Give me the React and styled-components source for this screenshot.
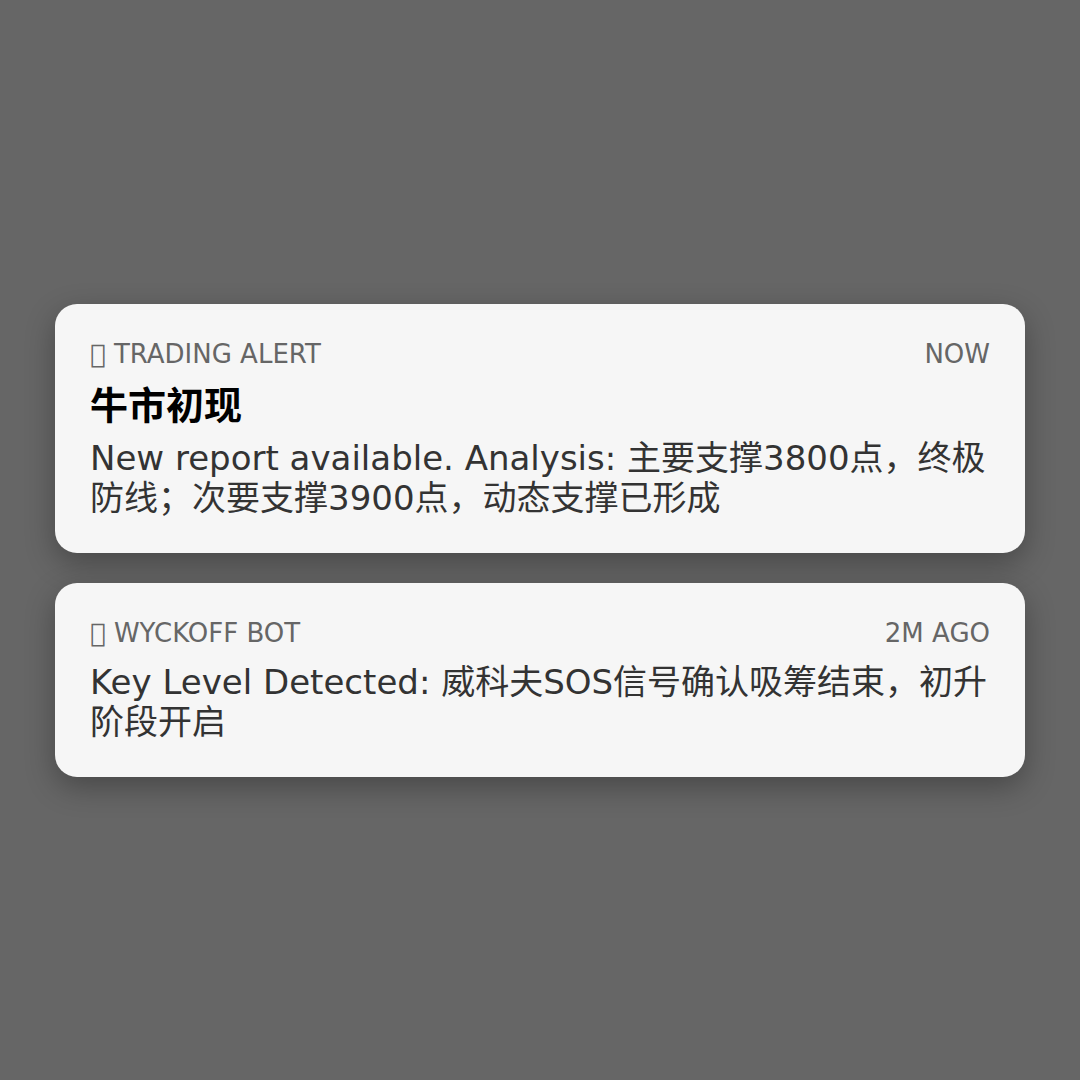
import styled, { createGlobalStyle } from "styled-components";

const GlobalStyle = createGlobalStyle`
  html, body {
    margin: 0;
    padding: 0;
    background: #666666;
  }
  body {
    font-family: "DejaVu Sans", "Noto Sans CJK SC", sans-serif;
  }
`;

const notifications = [
  {
    icon: "\uE000",
    app: "TRADING ALERT",
    time: "NOW",
    title: "牛市初现",
    body: "New report available. Analysis: 主要支撑3800点，终极防线；次要支撑3900点，动态支撑已形成",
  },
  {
    icon: "\uE001",
    app: "WYCKOFF BOT",
    time: "2M AGO",
    body: "Key Level Detected: 威科夫SOS信号确认吸筹结束，初升阶段开启",
  },
];

export default function App() {
  return (
    <>
      <GlobalStyle />
      <Page>
        <Stack>
          {notifications.map((n, i) => (
            <Card key={i}>
              <Header>
                <span>
                  {n.icon} {n.app}
                </span>
                <span>{n.time}</span>
              </Header>
              {n.title && <Title>{n.title}</Title>}
              <Body>{n.body}</Body>
            </Card>
          ))}
        </Stack>
      </Page>
    </>
  );
}

const Page = styled.div`
  width: 1080px;
  height: 1080px;
  display: flex;
  align-items: center;
  justify-content: center;
  box-sizing: border-box;
  padding: 0 55px;
`;

const Stack = styled.div`
  width: 100%;
  display: flex;
  flex-direction: column;
  gap: 30px;
`;

const Card = styled.div`
  background: #f6f6f6;
  border-radius: 22px;
  padding: 35px;
  box-shadow: 0 10px 30px rgba(0, 0, 0, 0.3);
`;

const Header = styled.div`
  display: flex;
  justify-content: space-between;
  align-items: center;
  font-size: 26px;
  line-height: 31px;
  color: #666666;
  margin-bottom: 13px;
`;

const Title = styled.div`
  font-size: 38px;
  line-height: 46px;
  font-weight: bold;
  color: #000000;
  margin-bottom: 9px;
`;

const Body = styled.div`
  font-size: 34px;
  line-height: 40px;
  color: #333333;
`;
